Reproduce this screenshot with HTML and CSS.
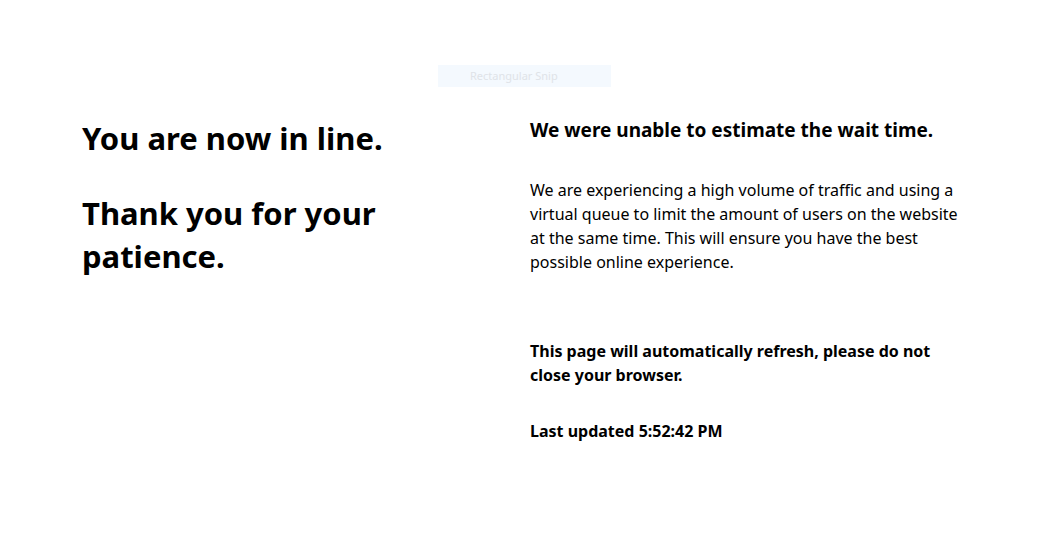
FILE: index.html
```html
<!DOCTYPE html>
<html lang="en">
<head>
    <meta charset="UTF-8">
    <meta name="viewport" content="width=device-width, initial-scale=1.0">
    <title>Queue</title>
    <link rel="stylesheet" href="styles.css">
</head>
<body>
    <div class="snip">Rectangular Snip</div>

    <div id="container">
        <div class="left">
            <h1>You are now in line.</h1>
            <h1>Thank you for your patience.</h1>
        </div>

        <div class="right">
            <h2>We were unable to estimate the wait time.</h2>
            <p class="info">We are experiencing a high volume of traffic and using a virtual queue to limit the amount of users on the website at the same time. This will ensure you have the best possible online experience.</p>
            <p class="notice">This page will automatically refresh, please do not close your browser.</p>
            <p class="notice updated">Last updated 5:52:42 PM</p>
        </div>
    </div>
</body>
</html>
```

FILE: styles.css
```css
body {
    font-family: 'Noto Sans', 'Open Sans', sans-serif;
    background-color: #fff;
    color: #000;
    margin: 0;
}

* {
    box-sizing: border-box;
}

.snip {
    position: absolute;
    left: 438px;
    top: 65px;
    width: 173px;
    height: 22px;
    background-color: #f4f9fe;
    color: #dfe3e8;
    font-size: 11px;
    line-height: 22px;
    padding-left: 32px;
}

#container {
    display: grid;
    grid-template-columns: 448px 1fr;
    padding: 116px 0 0 82px;
}

h1 {
    font-size: 31px;
    font-weight: bold;
    line-height: 43px;
    margin: 1px 0 32px 0;
    max-width: 340px;
}

h2 {
    font-size: 19px;
    font-weight: bold;
    line-height: 28px;
    margin: 0 0 34px 0;
}

p {
    margin: 0;
    font-size: 16px;
    line-height: 24px;
    max-width: 432px;
}

.info {
    margin-bottom: 65px;
}

.notice {
    font-weight: bold;
    max-width: 410px;
}

.updated {
    margin-top: 32px;
}
```
